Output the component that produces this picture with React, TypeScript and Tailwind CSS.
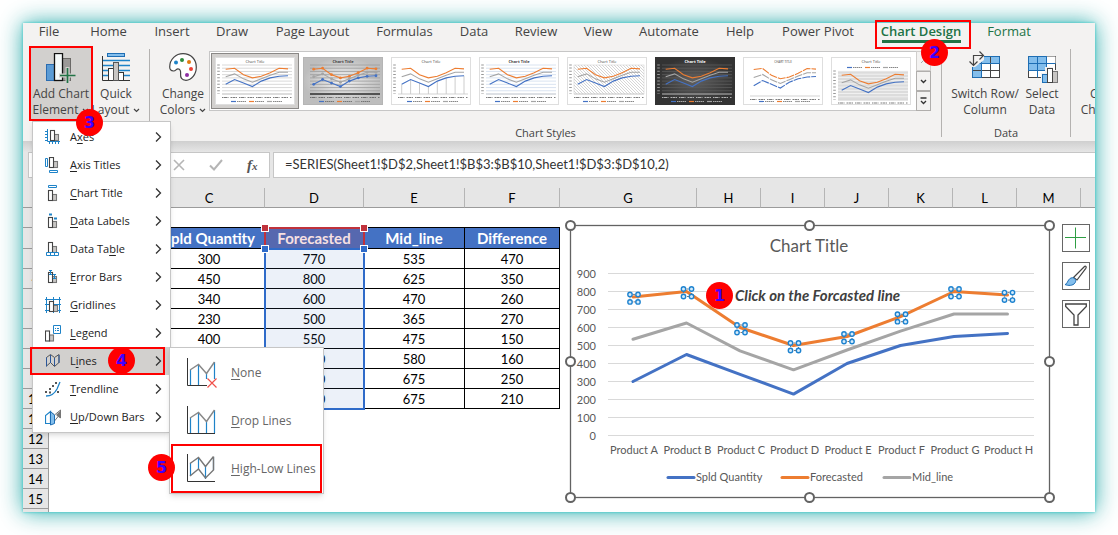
import React from 'react';

const UI = "font-['Open_Sans','Noto_Sans',sans-serif]";
const CELL = "font-['Lato','Open_Sans',sans-serif]";

const tabs = [
  { name: 'File', width: 'w-[52px]' },
  { name: 'Home', width: 'w-[67px]' },
  { name: 'Insert', width: 'w-[60px]' },
  { name: 'Draw', width: 'w-[60px]' },
  { name: 'Page Layout', width: 'w-[101px]' },
  { name: 'Formulas', width: 'w-[83px]' },
  { name: 'Data', width: 'w-[56px]' },
  { name: 'Review', width: 'w-[68px]' },
  { name: 'View', width: 'w-[56px]' },
  { name: 'Automate', width: 'w-[86px]' },
  { name: 'Help', width: 'w-[56px]' },
  { name: 'Power Pivot', width: 'w-[100px]' },
  { name: 'Chart Design', width: 'w-[106px]' },
  { name: 'Format', width: 'w-[70px]' },
];

const sold = [300, 450, 340, 230, 400, 500, 550, 567];
const forecast = [770, 800, 600, 500, 550, 660, 800, 780];
const mid = [535, 625, 470, 365, 475, 580, 675, 675];
const diff = [470, 350, 260, 270, 150, 160, 250, 210];

const series = [
  { name: 'Spld Quantity', color: '#4472c4', data: sold, legendX: 98 },
  { name: 'Forecasted', color: '#ed7d31', data: forecast, legendX: 212 },
  { name: 'Mid_line', color: '#a5a5a5', data: mid, legendX: 314 },
];

/* ---------- ribbon ---------- */

const CaretDown = () => (
  <svg className="ml-1 inline-block" width="7" height="5" viewBox="0 0 7 5" fill="none" stroke="#444" strokeWidth="1.2">
    <path d="M1 1l2.5 2.5L6 1" />
  </svg>
);

const AddElementIcon = () => (
  <svg width="30" height="30" viewBox="0 0 30 30">
    <rect x="0.5" y="11.5" width="8" height="16" fill="#5b9bd5" stroke="#2b6cb0" />
    <rect x="16" y="5.5" width="8.5" height="22" fill="#9b9998" stroke="#6b6967" />
    <rect x="8.5" y="0.5" width="8" height="27" fill="#f6fafa" stroke="#111" strokeWidth="1.3" />
    <path d="M21.5 14v16M13 22.5h17" stroke="#d2d0ce" strokeWidth="4" />
    <path d="M21.5 15v15M14 22.5h15.5" stroke="#217346" strokeWidth="1.7" />
  </svg>
);

const QuickLayoutIcon = () => (
  <svg width="28" height="28" viewBox="0 0 28 28">
    <rect x="5.5" y="0.5" width="17" height="3" fill="#83beec" stroke="#1e6eb4" />
    <path d="M1 7.5h27M1 12.5h27M1 17.5h27M1 22.5h27" stroke="#1e83c8" strokeWidth="1.3" />
    <path d="M0.5 3v24.5H28" fill="none" stroke="#333" />
    <rect x="6.5" y="15.5" width="5" height="12" fill="#fff" stroke="#333" />
    <rect x="16.5" y="19.5" width="5" height="8" fill="#fff" stroke="#333" />
    <rect x="11.5" y="9.5" width="5" height="18" fill="#c8c6c4" stroke="#555" />
  </svg>
);

const PaletteIcon = () => (
  <svg width="28" height="28" viewBox="0 0 28 28">
    <path
      d="M0.7 14C0.7 6 7 0.7 14 0.7C22 0.7 27.3 6.5 27.3 14C27.3 21.5 22.5 27.3 17 27.3C12.5 27.3 11.3 24.5 11.6 21C11.9 18 11 15.8 9 15.8C7 15.8 6.8 18.2 4.5 18C2.3 17.8 0.7 16.5 0.7 14Z"
      fill="#fff"
      stroke="#444"
      strokeWidth="1.2"
    />
    <circle cx="7" cy="9.5" r="2" fill="#1e83c8" />
    <circle cx="13" cy="7" r="2" fill="#2e8b3d" />
    <circle cx="20" cy="9" r="2" fill="#e07b10" />
    <circle cx="22" cy="16" r="2" fill="#ee4035" />
    <circle cx="18" cy="22" r="2" fill="#8e2fa3" />
  </svg>
);

const SwitchIcon = () => (
  <svg width="32" height="30" viewBox="0 0 32 30">
    <rect x="3.5" y="5.5" width="27" height="21" fill="#fff" stroke="#444" />
    <rect x="4" y="6" width="9" height="20" fill="#83beec" />
    <rect x="4" y="6" width="26" height="7" fill="#83beec" />
    <path d="M12.5 5.5v21M21.5 5.5v21M3.5 12.5h27M3.5 19.5h27" stroke="#444" />
    <path d="M12.5 5.5h18v7h-18zM3.5 12.5h9v14h-9z" fill="none" stroke="#1e6eb4" />
    <path d="M0 0h15v9L6 16H0z" fill="#f3f2f1" />
    <path d="M4.5 14.5V4.5h10M10.5 0.5l4 4-4 4M0.5 10.5l4 4 4-4" fill="none" stroke="#444" strokeWidth="1.2" />
  </svg>
);

const SelectDataIcon = () => (
  <svg width="31" height="30" viewBox="0 0 31 30">
    <rect x="1.5" y="3.5" width="27" height="21" fill="#fff" stroke="#444" />
    <path d="M1.5 3.5h18v14h-18z" fill="#83beec" />
    <path d="M19.5 3.5h9v7h-9z" fill="#fff" />
    <path d="M10.5 3.5v21M19.5 3.5v21M1.5 10.5h27M1.5 17.5h27" stroke="#1e6eb4" />
    <path d="M1.5 3.5h18v14h-18z" fill="none" stroke="#1e6eb4" />
    <path d="M14 20h4v-6h8v3h5v13H14z" fill="#f3f2f1" />
    <rect x="15.5" y="21.5" width="5" height="8" fill="#83beec" stroke="#1e6eb4" />
    <rect x="25.5" y="18.5" width="5" height="11" fill="#c8c6c4" stroke="#777" />
    <rect x="20.5" y="15.5" width="5" height="14" fill="#fff" stroke="#444" />
  </svg>
);

interface RibbonButtonProps {
  icon?: React.ReactNode;
  lines: [string, string];
  caret?: boolean;
  className: string;
}

const RibbonButton: React.FC<RibbonButtonProps> = ({ icon, lines, caret, className }) => (
  <button className={`flex h-[75px] shrink-0 flex-col items-center pt-[7px] text-[12px] leading-4 whitespace-nowrap text-[#444] ${className}`}>
    <span className="flex h-[33px] items-start">{icon}</span>
    <span>{lines[0]}</span>
    <span className="flex items-center">
      {lines[1]}
      {caret && <CaretDown />}
    </span>
  </button>
);

const Separator = ({ className = '' }: { className?: string }) => (
  <div className={`mt-[3px] h-[88px] w-px shrink-0 bg-[#b4b2b0] ${className}`} />
);

type ThumbKind = 'plain' | 'marker' | 'drop' | 'blue' | 'hatch' | 'dark' | 'gaps' | 'band';

const thumbKinds: ThumbKind[] = ['plain', 'marker', 'drop', 'blue', 'hatch', 'dark', 'gaps', 'band'];

const thumbNames = thumbKinds.map((_, i) => `Style ${i + 1}`);

const Thumb = ({ kind }: { kind: ThumbKind }) => {
  const top = kind === 'band' ? 14 : 8;
  const height = kind === 'gaps' ? 31 : 29;
  const x = (i: number) => 10.7 + i * 8.9;
  const y = (v: number) => top + height - (v / 900) * height;
  const dark = kind === 'dark';
  const ink = dark ? '#ddd' : '#555';
  const grid =
    kind === 'marker' ? '#9c9c9c' : dark ? '#5c5c5c' : kind === 'blue' ? '#cfdcec' : kind === 'band' ? '#f6f6f6' : '#cfcfcf';
  const legendY = kind === 'band' ? 10.5 : 44.5;
  const labelY = top + height + (kind === 'band' ? 3 : 3.5);
  const noGrid = kind === 'gaps' || kind === 'drop' || kind === 'hatch';
  return (
    <svg width="80" height="48" viewBox="0 0 80 48">
      <defs>
        <radialGradient id="grayFill">
          <stop offset="0" stopColor="#f4f4f4" />
          <stop offset="1" stopColor="#bdbdbd" />
        </radialGradient>
        <radialGradient id="darkFill">
          <stop offset="0" stopColor="#606060" />
          <stop offset="1" stopColor="#333" />
        </radialGradient>
        <pattern id="hatchFill" width="3" height="3" patternUnits="userSpaceOnUse">
          <path d="M0 0l3 3" stroke="#bbb" strokeWidth="0.6" />
        </pattern>
      </defs>
      <rect
        x="0.5"
        y="0.5"
        width="79"
        height="47"
        fill={kind === 'marker' ? 'url(#grayFill)' : dark ? 'url(#darkFill)' : '#fff'}
        stroke={kind === 'marker' ? '#b5b5b5' : dark ? '#333' : '#dedede'}
      />
      {kind === 'band' && <rect x="7" y={top} width="70" height={height} fill="#dcdcdc" />}
      {kind === 'hatch' && <rect x="7" y={top} width="70" height={height} fill="url(#hatchFill)" stroke="#ccc" strokeWidth="0.5" />}
      <text x="40" y="5.5" fontSize={kind === 'gaps' ? 3 : 4} textAnchor="middle" fill={dark ? '#fff' : '#444'} fontWeight={kind === 'marker' || kind === 'blue' || dark ? 700 : 400}>
        {kind === 'gaps' ? 'CHART TITLE' : 'Chart Title'}
      </text>
      {!noGrid &&
        Array.from({ length: 10 }, (_, i) => (
          <line key={i} x1="7" x2="77" y1={top + (i * height) / 9} y2={top + (i * height) / 9} stroke={grid} strokeWidth="0.8" />
        ))}
      {kind === 'drop' && sold.map((v, i) => <line key={i} x1={x(i)} x2={x(i)} y1={y(v)} y2={y(0)} stroke="#b8b8b8" strokeWidth="0.7" />)}
      <line x1="7" x2="77" y1={top + height} y2={top + height} stroke={kind === 'marker' ? '#333' : '#c8c8c8'} strokeWidth={kind === 'marker' ? 1.5 : 0.8} />
      {kind !== 'gaps' && kind !== 'marker' && (
        <line x1="3.5" x2="3.5" y1={top - 0.6} y2={top + height} stroke={ink} strokeWidth="2.6" strokeDasharray="1 2.22" opacity="0.6" />
      )}
      {series.map((s) => (
        <g key={s.name}>
          <polyline
            points={s.data.map((v, i) => `${x(i)},${y(v)}`).join(' ')}
            fill="none"
            stroke={s.color}
            strokeWidth="1.1"
            strokeDasharray={kind === 'gaps' ? '8 1' : undefined}
          />
          {kind === 'marker' &&
            s.data.map((v, i) => <circle key={i} cx={x(i)} cy={y(v)} r="1.4" fill={s.color} />)}
        </g>
      ))}
      <line x1="7" x2="77" y1={labelY} y2={labelY} stroke={ink} strokeWidth="1.2" strokeDasharray="1.5 0.5 3 0.5 1 2" opacity="0.75" />
      {series.map((s, i) => (
        <g key={s.name}>
          <line x1={16 + i * 18} x2={21 + i * 18} y1={legendY} y2={legendY} stroke={s.color} strokeWidth="1.2" />
          <line x1={22 + i * 18} x2={31 + i * 18} y1={legendY} y2={legendY} stroke={ink} strokeWidth="1.1" strokeDasharray="1 0.5 2 0.5" opacity="0.7" />
        </g>
      ))}
    </svg>
  );
};

const Ribbon = () => (
  <div className={`h-[118px] overflow-hidden bg-[#f3f2f1] ${UI}`}>
    <nav className="flex h-[23px]">
      {tabs.map((tab) => {
        const active = tab.name === 'Chart Design';
        const green = active || tab.name === 'Format';
        return (
          <button
            key={tab.name}
            className={`flex shrink-0 flex-col items-center text-[13px] leading-4 whitespace-nowrap ${tab.width} ${green ? 'text-[#217346]' : 'text-[#444]'} ${active ? 'font-semibold' : ''}`}
          >
            {tab.name}
            {active && <span className="mt-px h-[3px] w-[79px] bg-[#217346]" />}
          </button>
        );
      })}
    </nav>
    <div className="flex pl-2">
      <RibbonButton icon={<AddElementIcon />} lines={['Add Chart', 'Element']} caret className="w-[60px] bg-[#d2d0ce]" />
      <RibbonButton icon={<QuickLayoutIcon />} lines={['Quick', 'Layout']} caret className="w-[50px]" />
      <Separator className="ml-2" />
      <div className="flex w-[791px] shrink-0 flex-col">
        <div className="flex h-[79px] pl-[7px]">
          <RibbonButton icon={<PaletteIcon />} lines={['Change', 'Colors']} caret className="w-[52px]" />
          <div className="mt-[5px] flex h-[60px] w-[708px] border border-[#c6c6c6] bg-white p-px">
            {thumbKinds.map((kind, i) => (
              <button
                key={kind}
                aria-label={thumbNames[i]}
                className={`h-[56px] w-[88px] border p-[3px] ${i === 0 ? 'border-[#8a8886] bg-[#d2d0ce]' : 'border-transparent'}`}
              >
                <Thumb kind={kind} />
              </button>
            ))}
          </div>
          <div className="mt-[5px] -ml-px flex h-[60px] w-[15px] flex-col">
            <button aria-label="Previous row" className="flex flex-1 items-center justify-center border border-[#d0cecc]">
              <svg width="7" height="5" viewBox="0 0 7 5" fill="none" stroke="#aaa"><path d="M1 4l2.5-2.5L6 4" /></svg>
            </button>
            <button aria-label="Next row" className="flex flex-1 items-center justify-center border border-[#b0aeac]">
              <svg width="7" height="5" viewBox="0 0 7 5" fill="none" stroke="#333" strokeWidth="1.4"><path d="M1 1l2.5 2.5L6 1" /></svg>
            </button>
            <button aria-label="More styles" className="flex flex-1 items-center justify-center border border-[#b0aeac]">
              <svg width="7" height="8" viewBox="0 0 7 8" fill="none" stroke="#333" strokeWidth="1.3"><path d="M0.5 1h6M1 4l2.5 2.5L6 4" /></svg>
            </button>
          </div>
        </div>
        <div className="text-center text-[11px] leading-4 text-[#444]">Chart Styles</div>
      </div>
      <Separator />
      <div className="flex w-[128px] shrink-0 flex-col">
        <div className="flex h-[79px] pl-2">
          <RibbonButton icon={<span className="-mt-0.5"><SwitchIcon /></span>} lines={['Switch Row/', 'Column']} className="w-[70px]" />
          <RibbonButton icon={<SelectDataIcon />} lines={['Select', 'Data']} className="w-[44px]" />
        </div>
        <div className="text-center text-[11px] leading-4 text-[#444]">Data</div>
      </div>
      <Separator />
      <RibbonButton lines={['Change', 'Chart Type']} className="w-[80px]" />
    </div>
  </div>
);

/* ---------- formula bar and sheet ---------- */

const FormulaBar = () => (
  <div className="h-[47px] bg-[#e6e6e6]">
    <div className="h-[11px] bg-gradient-to-b from-[#cfcfcf] to-[#e6e6e6]" />
    <div className="flex h-[26px] pl-[5px]">
      <div className="w-[102px] border border-[#c6c6c6] bg-white" />
      <div className="ml-1 flex w-[136px] items-center gap-6 border border-[#c6c6c6] bg-white pl-[38px]">
        <button aria-label="Cancel">
          <svg width="12" height="12" viewBox="0 0 12 12" fill="none" stroke="#b5b5b5" strokeWidth="1.6"><path d="M1 1l10 10M11 1L1 11" /></svg>
        </button>
        <button aria-label="Enter">
          <svg width="14" height="12" viewBox="0 0 14 12" fill="none" stroke="#b5b5b5" strokeWidth="2"><path d="M1 6.5l4 4L13 1" /></svg>
        </button>
        <button aria-label="Insert function" className="font-['Liberation_Serif',serif] text-[15px] leading-5 font-bold text-[#555] italic">
          f<span className="text-[11px]">x</span>
        </button>
      </div>
      <input
        aria-label="Formula"
        readOnly
        value="=SERIES(Sheet1!$D$2,Sheet1!$B$3:$B$10,Sheet1!$D$3:$D$10,2)"
        className={`ml-[3px] min-w-0 flex-1 border border-r-0 border-[#c6c6c6] bg-white pl-[11px] text-[13px] text-[#333] outline-none ${CELL}`}
      />
    </div>
  </div>
);

const columns = ['A', 'B', 'C', 'D', 'E', 'F', 'G', 'H', 'I', 'J', 'K', 'L', 'M'];

const headCell = 'border-r border-b border-black bg-[#4472c4] text-[15px] font-bold text-white';
const dataCell = 'border-r border-b border-black';

const Sheet = () => (
  <table className={`w-full table-fixed border-separate border-spacing-0 bg-white text-center text-[13px] leading-4 text-black ${CELL}`}>
    <colgroup>
      <col className="w-[26px]" />
      <col className="w-[20px]" />
      <col className="w-[85px]" />
      <col className="w-[111px]" />
      <col className="w-[99px]" />
      <col className="w-[101px]" />
      <col className="w-[95px]" />
      <col className="w-[137px]" />
      <col className="w-[64px]" />
      <col className="w-[64px]" />
      <col className="w-[64px]" />
      <col className="w-[64px]" />
      <col className="w-[64px]" />
      <col className="w-[64px]" />
      <col />
    </colgroup>
    <thead>
      <tr className="h-5 bg-[#e6e6e6]">
        <th className="border-r border-b border-[#9b9b9b] p-0" />
        {columns.map((c) => (
          <th key={c} className="border-r border-b border-r-[#b5b5b5] border-b-[#9b9b9b] p-0 font-normal">
            {c}
          </th>
        ))}
        <th className="border-b border-[#9b9b9b] p-0" />
      </tr>
    </thead>
    <tbody>
      {Array.from({ length: 15 }, (_, i) => {
        const row = i + 1;
        const k = row - 3;
        const inData = k >= 0 && k < 8;
        const values = inData ? [sold[k], forecast[k], mid[k], diff[k]] : [];
        return (
          <tr key={row} className={row === 2 ? 'h-[21px]' : 'h-5'}>
            <th className="border-r border-b border-[#9b9b9b] bg-[#e6e6e6] p-0 font-normal">{row}</th>
            <td className="p-0" />
            <td className="p-0" />
            {row === 1 && [0, 1, 2, 3].map((n) => <td key={n} className="border-b border-black p-0" />)}
            {row === 2 &&
              ['Spld Quantity', 'Forecasted', 'Mid_line', 'Difference'].map((h) => (
                <td key={h} className={`p-0 whitespace-nowrap ${headCell}`}>{h}</td>
              ))}
            {values.map((v, n) => <td key={n} className={`p-0 ${dataCell}`}>{v}</td>)}
            {row > 10 && <td colSpan={4} className="p-0" />}
            <td colSpan={8} className="p-0" />
          </tr>
        );
      })}
      <tr className="h-[3px]">
        <th className="border-r border-[#9b9b9b] bg-[#e6e6e6] p-0" />
        <td colSpan={14} className="p-0" />
      </tr>
    </tbody>
  </table>
);

// Red marks the series name range, blue marks the series values
const RangeMarks = () => (
  <>
    <div className="absolute top-[39px] left-[241px] h-[22px] w-[101px] border-2 border-b-0 border-[#c0323c] bg-[#c0323c]/15" />
    <div className="absolute top-[60px] left-[241px] h-[162px] w-[101px] border-2 border-[#2f6bc9] bg-[#4472c4]/10" />
    <div className="absolute top-[36px] left-[238px] size-[8px] border border-white bg-[#c0323c]" />
    <div className="absolute top-[36px] left-[337px] size-[8px] border border-white bg-[#c0323c]" />
    <div className="absolute top-[57px] left-[238px] size-[8px] border border-white bg-[#2f6bc9]" />
    <div className="absolute top-[57px] left-[337px] size-[8px] border border-white bg-[#2f6bc9]" />
  </>
);

const chartX = (i: number) => 65 + i * 53.5;
const chartY = (v: number) => 215.5 - v * 0.18;

const LineChart = () => (
  <svg className={CELL} width="490" height="284" viewBox="0 0 490 284">
    <rect x="5.5" y="5.5" width="479" height="272" fill="#fff" stroke="#636363" strokeWidth="1.3" />
    <text x="244" y="32" fontSize="17" textAnchor="middle" fill="#595959">Chart Title</text>
    {Array.from({ length: 10 }, (_, i) => (
      <g key={i}>
        <line x1="43" x2="469" y1={chartY(i * 100)} y2={chartY(i * 100)} stroke="#d9d9d9" />
        <text x="31" y={chartY(i * 100) + 4} fontSize="11" textAnchor="end" fill="#595959">{i * 100}</text>
      </g>
    ))}
    {series.map((s) => (
      <polyline
        key={s.name}
        points={s.data.map((v, i) => `${chartX(i) + 3},${chartY(v)}`).join(' ')}
        fill="none"
        stroke={s.color}
        strokeWidth="3"
        strokeLinecap="round"
        strokeLinejoin="round"
      />
    ))}
    {forecast.map((v, i) => {
      const x = chartX(i) + 4;
      const y = chartY(v) + 1.5;
      return (
        <g key={i} fill="#d6ecfb" stroke="#1e83d0" strokeWidth="1.4">
          <rect x={x - 4} y={y - 4} width="8" height="7.5" fill="none" stroke="#777" strokeWidth="1" strokeDasharray="2 1" />
          <circle cx={x - 4} cy={y - 4} r="2.2" />
          <circle cx={x + 4} cy={y - 4} r="2.2" />
          <circle cx={x - 4} cy={y + 3.5} r="2.2" />
          <circle cx={x + 4} cy={y + 3.5} r="2.2" />
        </g>
      );
    })}
    {'ABCDEFGH'.split('').map((c, i) => (
      <text key={c} x={chartX(i) + 4} y="234" fontSize="11" textAnchor="middle" fill="#595959">Product {c}</text>
    ))}
    {series.map((s) => (
      <g key={s.name}>
        <line x1={s.legendX + 5} x2={s.legendX + 31} y1="257.5" y2="257.5" stroke={s.color} strokeWidth="3" strokeLinecap="round" />
        <text x={s.legendX + 33} y="261" fontSize="11" fill="#595959">{s.name}</text>
      </g>
    ))}
    {[5.5, 244.5, 484.5].map((x) =>
      [5.5, 141.5, 277.5]
        .filter((y) => x !== 244.5 || y !== 141.5)
        .map((y) => <circle key={`${x}-${y}`} cx={x} cy={y} r="4.5" fill="#fff" stroke="#636363" strokeWidth="2" />)
    )}
  </svg>
);

const ChartTools = () => (
  <div className="flex flex-col gap-[10px]">
    <button aria-label="Chart elements" className="flex size-7 items-center justify-center border border-[#666] bg-white">
      <svg width="22" height="22" viewBox="0 0 22 22" stroke="#2f9e44"><path d="M10.5 0.5v21M0 10.5h21" /></svg>
    </button>
    <button aria-label="Chart styles" className="flex size-7 items-center justify-center border border-[#666] bg-white">
      <svg width="24" height="22" viewBox="0 0 24 22">
        <path d="M9.5 12.5L20 2c1.5-1.5 3-0.5 1.8 1.3L13 15z" fill="#fff" stroke="#444" strokeWidth="1.2" />
        <path d="M1 19.5c3-0.5 2.5-6.5 7.5-6.8c3 0.5 4 3 2.5 5.2c-2 3-7 3-10 1.6z" fill="#83beec" stroke="#1e6eb4" />
      </svg>
    </button>
    <button aria-label="Chart filters" className="flex size-7 items-center justify-center border border-[#666] bg-white">
      <svg width="22" height="23" viewBox="0 0 22 23" fill="#fff" stroke="#444" strokeWidth="1.3">
        <path d="M0.7 1h20.6v2.5L13 12v10H9V12L0.7 3.5z" />
      </svg>
    </button>
  </div>
);

/* ---------- menus ---------- */

const Bars = ({ x = 5, y = 3 }: { x?: number; y?: number }) => (
  <g stroke="#444" strokeWidth="1.1">
    <rect x={x + 4} y={y + 4} width="4" height="6" fill="#c8c6c4" stroke="#777" />
    <rect x={x} y={y} width="4" height="10" fill="#fff" />
  </g>
);

const menuItems: { label: string; accel: number; icon: React.ReactNode }[] = [
  { label: 'Axes', accel: 1, icon: <><path d="M2.5 0v12.5H15M0 2.5h3M0 5.5h3M0 8.5h3M0 11.5h3M4.5 12v3M7.5 12v3M10.5 12v3M13.5 12v3" stroke="#1e83c8" /><Bars x={5.5} y={1.5} /></> },
  { label: 'Axis Titles', accel: 0, icon: <><Bars x={4.5} y={0.5} /><path d="M0.5 1.5h2v8h-2zM4.5 13.5h8v2h-8z" stroke="#1e83c8" /></> },
  { label: 'Chart Title', accel: 0, icon: <><Bars x={3.5} y={5.5} /><path d="M3.5 0.5h8v2h-8z" stroke="#1e83c8" /></> },
  { label: 'Data Labels', accel: 0, icon: <><Bars x={3.5} y={4.5} /><path d="M4 1.5h3M9 5.5h3" stroke="#1e83c8" strokeWidth="2" /></> },
  { label: 'Data Table', accel: 7, icon: <><Bars x={3.5} y={1.5} /><path d="M1.5 11.5h12v3h-12zM5.5 11.5v3M9.5 11.5v3" stroke="#1e83c8" fill="#fff" /></> },
  { label: 'Error Bars', accel: 0, icon: <><Bars x={3.5} y={3.5} /><path d="M5.5 1v5M4 1.5h3M4 5.5h3M9.5 5v5M8 5.5h3M8 9.5h3" stroke="#1e83c8" /></> },
  { label: 'Gridlines', accel: 0, icon: <><path d="M1.5 0v16M8.5 0v16M14.5 0v16M0 2.5h16M0 7.5h16M0 13.5h16" stroke="#1e83c8" /><Bars x={4.5} y={4.5} /></> },
  { label: 'Legend', accel: 0, icon: <><Bars x={0.5} y={6} /><path d="M8.5 0.5h7v8h-7zM10 3.5h1M12 3.5h2M10 5.5h1M12 5.5h2" fill="#fff" stroke="#1e83c8" /></> },
  { label: 'Lines', accel: 1, icon: <><path d="M1.5 4.5L5.5 1.5l4 3L14 1.5v8l-4.5 4-4-4-4 3.5z" stroke="#555" /><path d="M1.5 4.5v9M5.5 2v8M9.5 5v8M14 2v8" stroke="#2b579a" /></> },
  { label: 'Trendline', accel: 0, icon: <><path d="M1 15c6 0 9-3 11-7l3-7" stroke="#1e83c8" strokeWidth="1.3" /><path d="M0 11h2M4 8h2M7 5h2M10 2h2M4 11.5h2M12 11h2" stroke="#555" strokeWidth="1.8" /></> },
  { label: 'Up/Down Bars', accel: 0, icon: <><path d="M5.5 3l4 3 6-5v8l-2-2-4 5" stroke="#777" /><path d="M0.5 6.5v8h5v-12z" stroke="#1e83c8" fill="#fff" strokeWidth="1.2" /><path d="M5.5 2.500l4 3.500v8.500l-4 1.500z" stroke="#1e6eb4" fill="#83beec" /><path d="M11 6l4.500-4.500v8z" fill="#777" /></> },
];

const AccelText = ({ text, at }: { text: string; at: number }) => (
  <span>
    {text.slice(0, at)}
    <span className="underline underline-offset-2">{text[at]}</span>
    {text.slice(at + 1)}
  </span>
);

const subItems: { label: string; icon: React.ReactNode }[] = [
  { label: 'None', icon: <><path d="M3.5 12v16M11.5 6v22M19.5 15v6M27.5 4v17" stroke="#1e83c8" strokeWidth="1.2" /><path d="M3 12l8.5-5.5 8 9L27.5 4" stroke="#888" strokeWidth="1.4" /><path d="M0.5 0v27.5H20" stroke="#333" /><path d="M20.5 20.5l9 9M29.5 20.5l-9 9" stroke="#f0504a" strokeWidth="1.2" /></> },
  { label: 'Drop Lines', icon: <><path d="M3.5 12v15M11.5 6v21M19.5 15v12M27.5 4v23" stroke="#1e83c8" strokeWidth="1.2" /><path d="M3 12l8.5-5.5 8 9L27.5 4" stroke="#888" strokeWidth="1.4" /><path d="M0.5 0v27.5H28" stroke="#333" /></> },
  { label: 'High-Low Lines', icon: <><path d="M3.5 9v13M11.5 4v12M18.5 12v13M26.5 3v13" stroke="#1e83c8" strokeWidth="1.2" /><path d="M3 9.5L11.5 3.5l7 9 8-10M3 22l8.5-7 7 9 8-8V2.5" stroke="#777" strokeWidth="1.4" /><path d="M0.5 0v27.5H28" stroke="#333" /></> },
];

const ElementMenu = () => (
  <div className={`w-[139px] border border-[#c6c6c6] bg-white py-px shadow-md ${UI}`}>
    {menuItems.map((item) => (
      <button
        key={item.label}
        className={`flex h-7 w-full items-center text-[11px] whitespace-nowrap text-[#222] ${item.label === 'Lines' ? 'bg-[#d2d0ce]' : ''}`}
      >
        <svg className="ml-3 shrink-0" width="17" height="17" viewBox="0 0 17 17" fill="none">{item.icon}</svg>
        <span className="ml-2 flex-1 text-left"><AccelText text={item.label} at={item.accel} /></span>
        <svg className="mr-2 shrink-0" width="7" height="10" viewBox="0 0 7 10" fill="none" stroke="#333" strokeWidth="1.3"><path d="M1 0.5L5.5 5 1 9.5" /></svg>
      </button>
    ))}
  </div>
);

const LinesMenu = () => (
  <div className={`w-[155px] border border-[#c6c6c6] bg-white shadow-md ${UI}`}>
    {subItems.map((item) => (
      <button key={item.label} className="flex h-12 w-full items-center gap-[14px] pt-[2px] pl-[17px] text-[12px] whitespace-nowrap text-[#666]">
        <svg width="30" height="30" viewBox="0 0 30 30" fill="none">{item.icon}</svg>
        <AccelText text={item.label} at={0} />
      </button>
    ))}
    <div className="h-px" />
  </div>
);

/* ---------- callouts ---------- */

const Badge = ({ n, className }: { n: number; className: string }) => (
  <span className={`absolute flex size-[27px] items-center justify-center rounded-full bg-[#ff0000] font-['DejaVu_Sans',sans-serif] text-[16px] font-bold text-[#4000ff] ${className}`}>
    {n}
  </span>
);

const App: React.FC = () => {
  return (
    <div className="bg-white p-[23px]">
      <div className="relative shadow-[0_0_3px_#2cc4c4,0_0_22px_rgba(30,165,165,0.95)]">
        <Ribbon />
        <FormulaBar />
        <div className="relative overflow-hidden">
          <Sheet />
          <RangeMarks />
          <div className="absolute top-[32px] left-[542px]">
            <LineChart />
          </div>
          <div className="absolute top-[36px] left-[1039px]">
            <ChartTools />
          </div>
          <p className={`absolute top-[99px] left-[710px] bg-white pl-[2px] text-[15px] leading-4 font-bold whitespace-nowrap text-[#404040] italic ${CELL}`}>
            Click on the Forcasted line
          </p>
        </div>

        <div className="absolute top-[98px] left-[9px]">
          <ElementMenu />
        </div>
        <div className="absolute top-[324px] left-[146px]">
          <LinesMenu />
        </div>

        <div className="absolute top-[23px] left-[6px] h-[75px] w-[64px] border-2 border-[#ff0000]" />
        <div className="absolute top-[-3px] left-[852px] h-[29px] w-[96px] border-2 border-[#ff0000]" />
        <div className="absolute top-[324px] left-[7px] h-[28px] w-[135px] border-2 border-[#ff0000]" />
        <div className="absolute top-[421px] left-[148px] h-[49px] w-[151px] border-2 border-[#ff0000]" />
        <Badge n={1} className="top-[259px] left-[683px]" />
        <Badge n={2} className="top-[16px] left-[898px]" />
        <Badge n={3} className="top-[86px] left-[53px]" />
        <Badge n={4} className="top-[324px] left-[85px]" />
        <Badge n={5} className="top-[431px] left-[125px]" />
      </div>
    </div>
  );
};

export default App;
